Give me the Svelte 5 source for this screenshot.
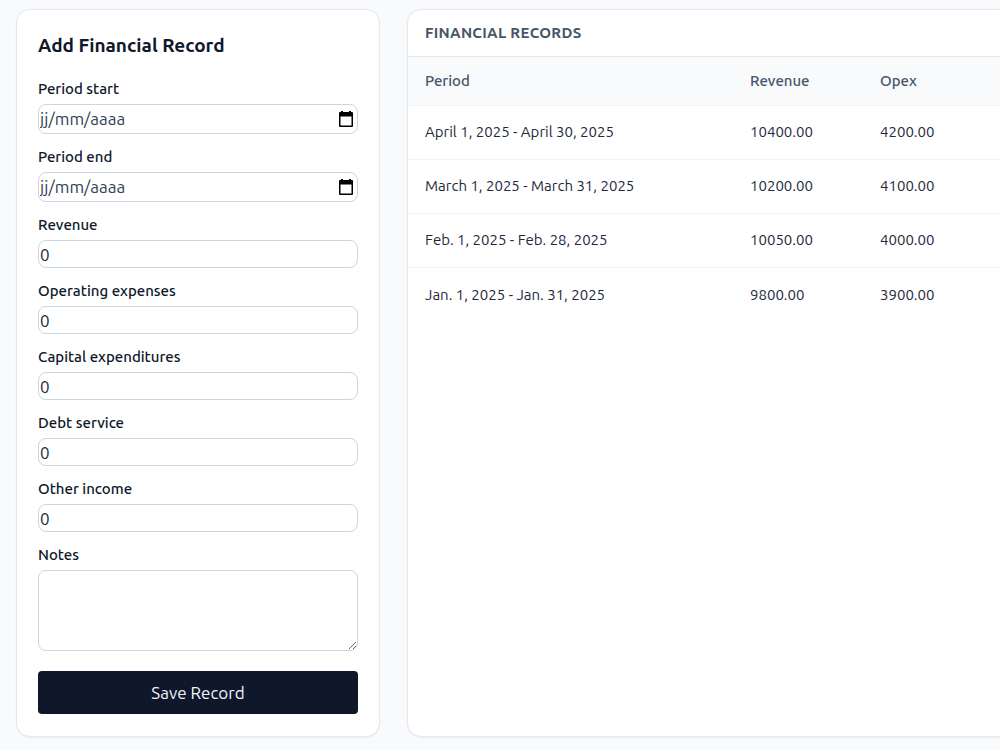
<script>
  const dates = [
    { id: 'period_start', label: 'Period start' },
    { id: 'period_end', label: 'Period end' },
  ];

  const amounts = [
    { id: 'revenue', label: 'Revenue' },
    { id: 'opex', label: 'Operating expenses' },
    { id: 'capex', label: 'Capital expenditures' },
    { id: 'debt_service', label: 'Debt service' },
    { id: 'other_income', label: 'Other income' },
  ];

  const records = [
    { period: 'April 1, 2025 - April 30, 2025', revenue: '10400.00', opex: '4200.00' },
    { period: 'March 1, 2025 - March 31, 2025', revenue: '10200.00', opex: '4100.00' },
    { period: 'Feb. 1, 2025 - Feb. 28, 2025', revenue: '10050.00', opex: '4000.00' },
    { period: 'Jan. 1, 2025 - Jan. 31, 2025', revenue: '9800.00', opex: '3900.00' },
  ];
</script>

<main>
  <form class="card entry" onsubmit={(e) => e.preventDefault()}>
    <h2>Add Financial Record</h2>

    {#each dates as field}
      <div class="field">
        <label for={field.id}>{field.label}</label>
        <div class="box date">
          <input id={field.id} type="text" placeholder="jj/mm/aaaa" />
          <button type="button" class="picker" aria-label="Choose date">
            <svg width="16" height="16" viewBox="0 0 16 16" aria-hidden="true">
              <path
                fill="#000"
                fill-rule="evenodd"
                d="M3 0h2v1h6V0h2v1h1a1 1 0 0 1 1 1v13a1 1 0 0 1-1 1H2a1 1 0 0 1-1-1V2a1 1 0 0 1 1-1h1zM2.500 5.500v9h11v-9z"
              />
            </svg>
          </button>
        </div>
      </div>
    {/each}

    {#each amounts as field}
      <div class="field">
        <label for={field.id}>{field.label}</label>
        <input class="box amount" id={field.id} type="text" inputmode="decimal" value="0" />
      </div>
    {/each}

    <div class="field">
      <label for="notes">Notes</label>
      <textarea class="box" id="notes"></textarea>
    </div>

    <button type="submit" class="save">Save Record</button>
  </form>

  <section class="card records">
    <h3>Financial Records</h3>
    <table>
      <colgroup>
        <col class="period" />
        <col class="revenue" />
        <col />
      </colgroup>
      <thead>
        <tr><th>Period</th><th>Revenue</th><th>Opex</th></tr>
      </thead>
      <tbody>
        {#each records as record}
          <tr><td>{record.period}</td><td>{record.revenue}</td><td>{record.opex}</td></tr>
        {/each}
      </tbody>
    </table>
  </section>
</main>

<style>
  :global(body) {
    background: #f8fafc;
    color: #0f172a;
    font-family: Ubuntu, "Noto Sans", "Open Sans", sans-serif;
    font-size: 17px;
  }

  main {
    display: flex;
    gap: 27px;
    padding: 9px 0 13px 16px;
    overflow-x: hidden;
  }

  .card {
    box-sizing: border-box;
    background: #fff;
    border: 1px solid #e2e8f0;
    border-radius: 14px;
    box-shadow: 0 1px 2px rgb(0 0 0 / 0.05);
  }

  .entry {
    flex: 0 0 364px;
    padding: 22px 21px;
  }

  h2 {
    margin: 0 0 21px;
    font-size: 19px;
    font-weight: 600;
    line-height: 26px;
  }

  .field {
    margin-bottom: 13px;
  }

  label {
    display: block;
    margin-bottom: 5px;
    font-size: 15px;
    font-weight: 500;
    line-height: 20px;
  }

  .box {
    box-sizing: border-box;
    display: block;
    width: 100%;
    border: 1px solid #cbd5e1;
    border-radius: 8px;
    background: #fff;
    color: #1e293b;
    font: inherit;
  }

  .amount {
    height: 28px;
    padding: 0 1px;
  }

  .date {
    display: flex;
    align-items: center;
    height: 30px;
    padding: 0 3px 1px 1px;
  }

  .date input {
    flex: 1;
    min-width: 0;
    padding: 0;
    border: 0;
    background: none;
    color: inherit;
    font: inherit;
  }

  .date input::placeholder {
    color: #334155;
    opacity: 1;
  }

  .picker {
    display: flex;
    padding: 0;
    border: 0;
    background: none;
  }

  textarea {
    height: 81px;
  }

  .save {
    width: 100%;
    height: 43px;
    margin-top: 7px;
    padding: 0;
    border: 0;
    border-radius: 4px;
    background: #0f172a;
    color: #f1f5f9;
    font: inherit;
  }

  .records {
    flex: 1 0 720px;
    overflow: hidden;
  }

  h3 {
    margin: 0;
    padding: 13px 17px;
    border-bottom: 1px solid #e2e8f0;
    color: #475569;
    font-size: 15px;
    font-weight: 600;
    line-height: 20px;
    letter-spacing: 0.02em;
    text-transform: uppercase;
  }

  table {
    width: 100%;
    border-spacing: 0;
    table-layout: fixed;
    font-size: 15px;
  }

  .period {
    width: 325px;
  }

  .revenue {
    width: 130px;
  }

  th,
  td {
    box-sizing: border-box;
    height: 54px;
    padding: 0 17px 2px;
    border-bottom: 1px solid #f1f5f9;
    color: #1e293b;
    text-align: left;
  }

  th {
    height: 49px;
    background: #f8fafc;
    color: #475569;
    font-weight: 500;
  }

  tbody tr:last-child td {
    border-bottom: 0;
  }
</style>
